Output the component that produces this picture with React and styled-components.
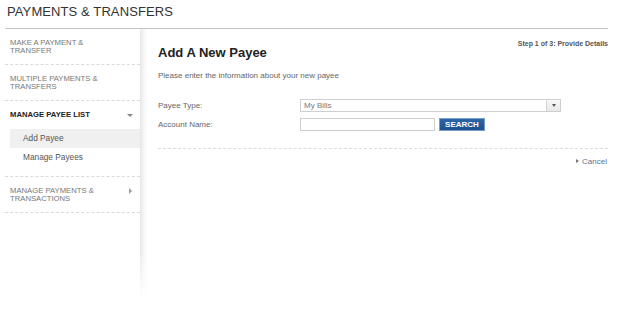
import styled, { createGlobalStyle } from "styled-components";

const GlobalStyle = createGlobalStyle`
  body {
    margin: 0;
    background: #fff;
    font-family: "Liberation Sans", Arial, sans-serif;
  }
`;

const navItems = [
    { label: "Make a Payment & Transfer" },
    { label: "Multiple Payments & Transfers" },
    { label: "Manage Payee List", open: true, children: ["Add Payee", "Manage Payees"] },
    { label: "Manage Payments & Transactions", arrow: "right" },
];

export default function App() {
    return (
        <Page>
            <GlobalStyle />
            <Header>
                <PageTitle>PAYMENTS &amp; TRANSFERS</PageTitle>
            </Header>
            <Body>
                <Sidebar>
                    {navItems.map((item) => (
                        <NavItem key={item.label}>
                            <NavHead>
                                <NavLabel $active={item.open}>{item.label}</NavLabel>
                                {item.open && <ArrowDown />}
                                {item.arrow === "right" && <ArrowRight />}
                            </NavHead>
                            {item.children && (
                                <SubList>
                                    {item.children.map((c, i) => (
                                        <SubItem key={c} $selected={i === 0}>{c}</SubItem>
                                    ))}
                                </SubList>
                            )}
                        </NavItem>
                    ))}
                </Sidebar>
                <Main>
                    <TopRow>
                        <Title>Add A New Payee</Title>
                        <Step>Step 1 of 3: Provide Details</Step>
                    </TopRow>
                    <Intro>Please enter the information about your new payee</Intro>
                    <Form>
                        <FormRow>
                            <Label>Payee Type:</Label>
                            <Select>
                                <SelectValue>My Bills</SelectValue>
                                <SelectButton />
                            </Select>
                        </FormRow>
                        <FormRow>
                            <Label>Account Name:</Label>
                            <TextInput type="text" />
                            <SearchButton>SEARCH</SearchButton>
                        </FormRow>
                    </Form>
                    <Divider />
                    <Actions>
                        <CancelLink href="#">Cancel</CancelLink>
                    </Actions>
                </Main>
            </Body>
        </Page>
    );
}

const Page = styled.div`
width: 603px;
padding-left: 5px;
color: #555;
`;

const Header = styled.div`
height: 28px;
border-bottom: 1px solid #c4c4c4;
`;

const PageTitle = styled.h1`
margin: 0;
padding: 4px 0 0 2px;
font-size: 13px;
line-height: 16px;
font-weight: normal;
color: #333;
letter-spacing: 0.1px;
`;

const Body = styled.div`
display: flex;
`;

const Sidebar = styled.nav`
width: 135px;
flex-shrink: 0;
`;

const NavItem = styled.div`
padding: 10px 0 9px 0;
border-bottom: 1px dashed #dadada;
`;

const NavHead = styled.div`
display: flex;
justify-content: space-between;
align-items: flex-start;
padding: 0 7px 0 5px;
`;

const NavLabel = styled.span`
width: 105px;
font-size: 7.7px;
line-height: 8px;
text-transform: uppercase;
color: ${(p) => (p.$active ? "#222" : "#777")};
font-weight: ${(p) => (p.$active ? "bold" : "normal")};
`;

const ArrowDown = styled.span`
margin-top: 3px;
width: 0;
height: 0;
border-left: 3px solid transparent;
border-right: 3px solid transparent;
border-top: 3px solid #888;
`;

const ArrowRight = styled.span`
margin: 1px 1px 0 0;
width: 0;
height: 0;
border-top: 3px solid transparent;
border-bottom: 3px solid transparent;
border-left: 3px solid #999;
`;

const SubList = styled.div`
margin: 10px 0 0 5px;
`;

const SubItem = styled.div`
height: 19px;
line-height: 19px;
padding-left: 13px;
font-size: 8.3px;
color: #555;
background: ${(p) => (p.$selected ? "#f0f0f0" : "transparent")};
`;

const Main = styled.main`
flex: 1;
min-height: 262px;
padding: 10px 0 0 18px;
background:
  linear-gradient(to bottom, rgba(255,255,255,0) 80%, #fff 100%),
  linear-gradient(to right, #e6e6e6 0, #f3f3f3 3px, #fbfbfb 6px, #fff 8px);
`;

const TopRow = styled.div`
display: flex;
justify-content: space-between;
align-items: flex-start;
`;

const Title = styled.h2`
margin: 6px 0 0;
font-size: 13px;
line-height: 16px;
font-weight: bold;
color: #222;
`;

const Step = styled.span`
font-size: 7px;
line-height: 9px;
font-weight: bold;
color: #555;
`;

const Intro = styled.p`
margin: 10px 0 0;
font-size: 8px;
line-height: 10px;
color: #666;
`;

const Form = styled.div`
margin-top: 18px;
display: flex;
flex-direction: column;
gap: 6px;
`;

const FormRow = styled.div`
display: flex;
align-items: center;
height: 13px;
`;

const Label = styled.span`
width: 142px;
font-size: 8px;
color: #666;
`;

const Select = styled.div`
width: 261px;
height: 13px;
box-sizing: border-box;
border: 1px solid #cfcfcf;
display: flex;
align-items: center;
justify-content: space-between;
`;

const SelectValue = styled.span`
padding-left: 3px;
font-size: 8px;
color: #777;
`;

const SelectButton = styled.span`
width: 13px;
height: 11px;
border-left: 1px solid #d4d4d4;
background: linear-gradient(#f8f8f8, #e8e8e8);
position: relative;
&::after {
  content: "";
  position: absolute;
  left: 5px;
  top: 4px;
  border-left: 2px solid transparent;
  border-right: 2px solid transparent;
  border-top: 3px solid #555;
}
`;

const TextInput = styled.input`
width: 135px;
height: 13px;
box-sizing: border-box;
margin: 0;
padding: 0;
border: 1px solid #cfcfcf;
outline: none;
`;

const SearchButton = styled.button`
margin-left: 4px;
width: 46px;
height: 13px;
box-sizing: border-box;
padding: 0;
border: 1px solid #7b9ec7;
background: linear-gradient(#2d67a8, #1c5190);
color: #fff;
font-family: inherit;
font-size: 8px;
font-weight: bold;
line-height: 11px;
`;

const Divider = styled.div`
margin-top: 17px;
border-top: 1px dashed #dcdcdc;
`;

const Actions = styled.div`
display: flex;
justify-content: flex-end;
margin-top: 8px;
padding-right: 1px;
`;

const CancelLink = styled.a`
font-size: 8px;
line-height: 10px;
color: #5b7196;
text-decoration: none;
&::before {
  content: "";
  display: inline-block;
  margin-right: 3px;
  vertical-align: 1px;
  border-top: 2px solid transparent;
  border-bottom: 2px solid transparent;
  border-left: 3px solid #777;
}
`;
